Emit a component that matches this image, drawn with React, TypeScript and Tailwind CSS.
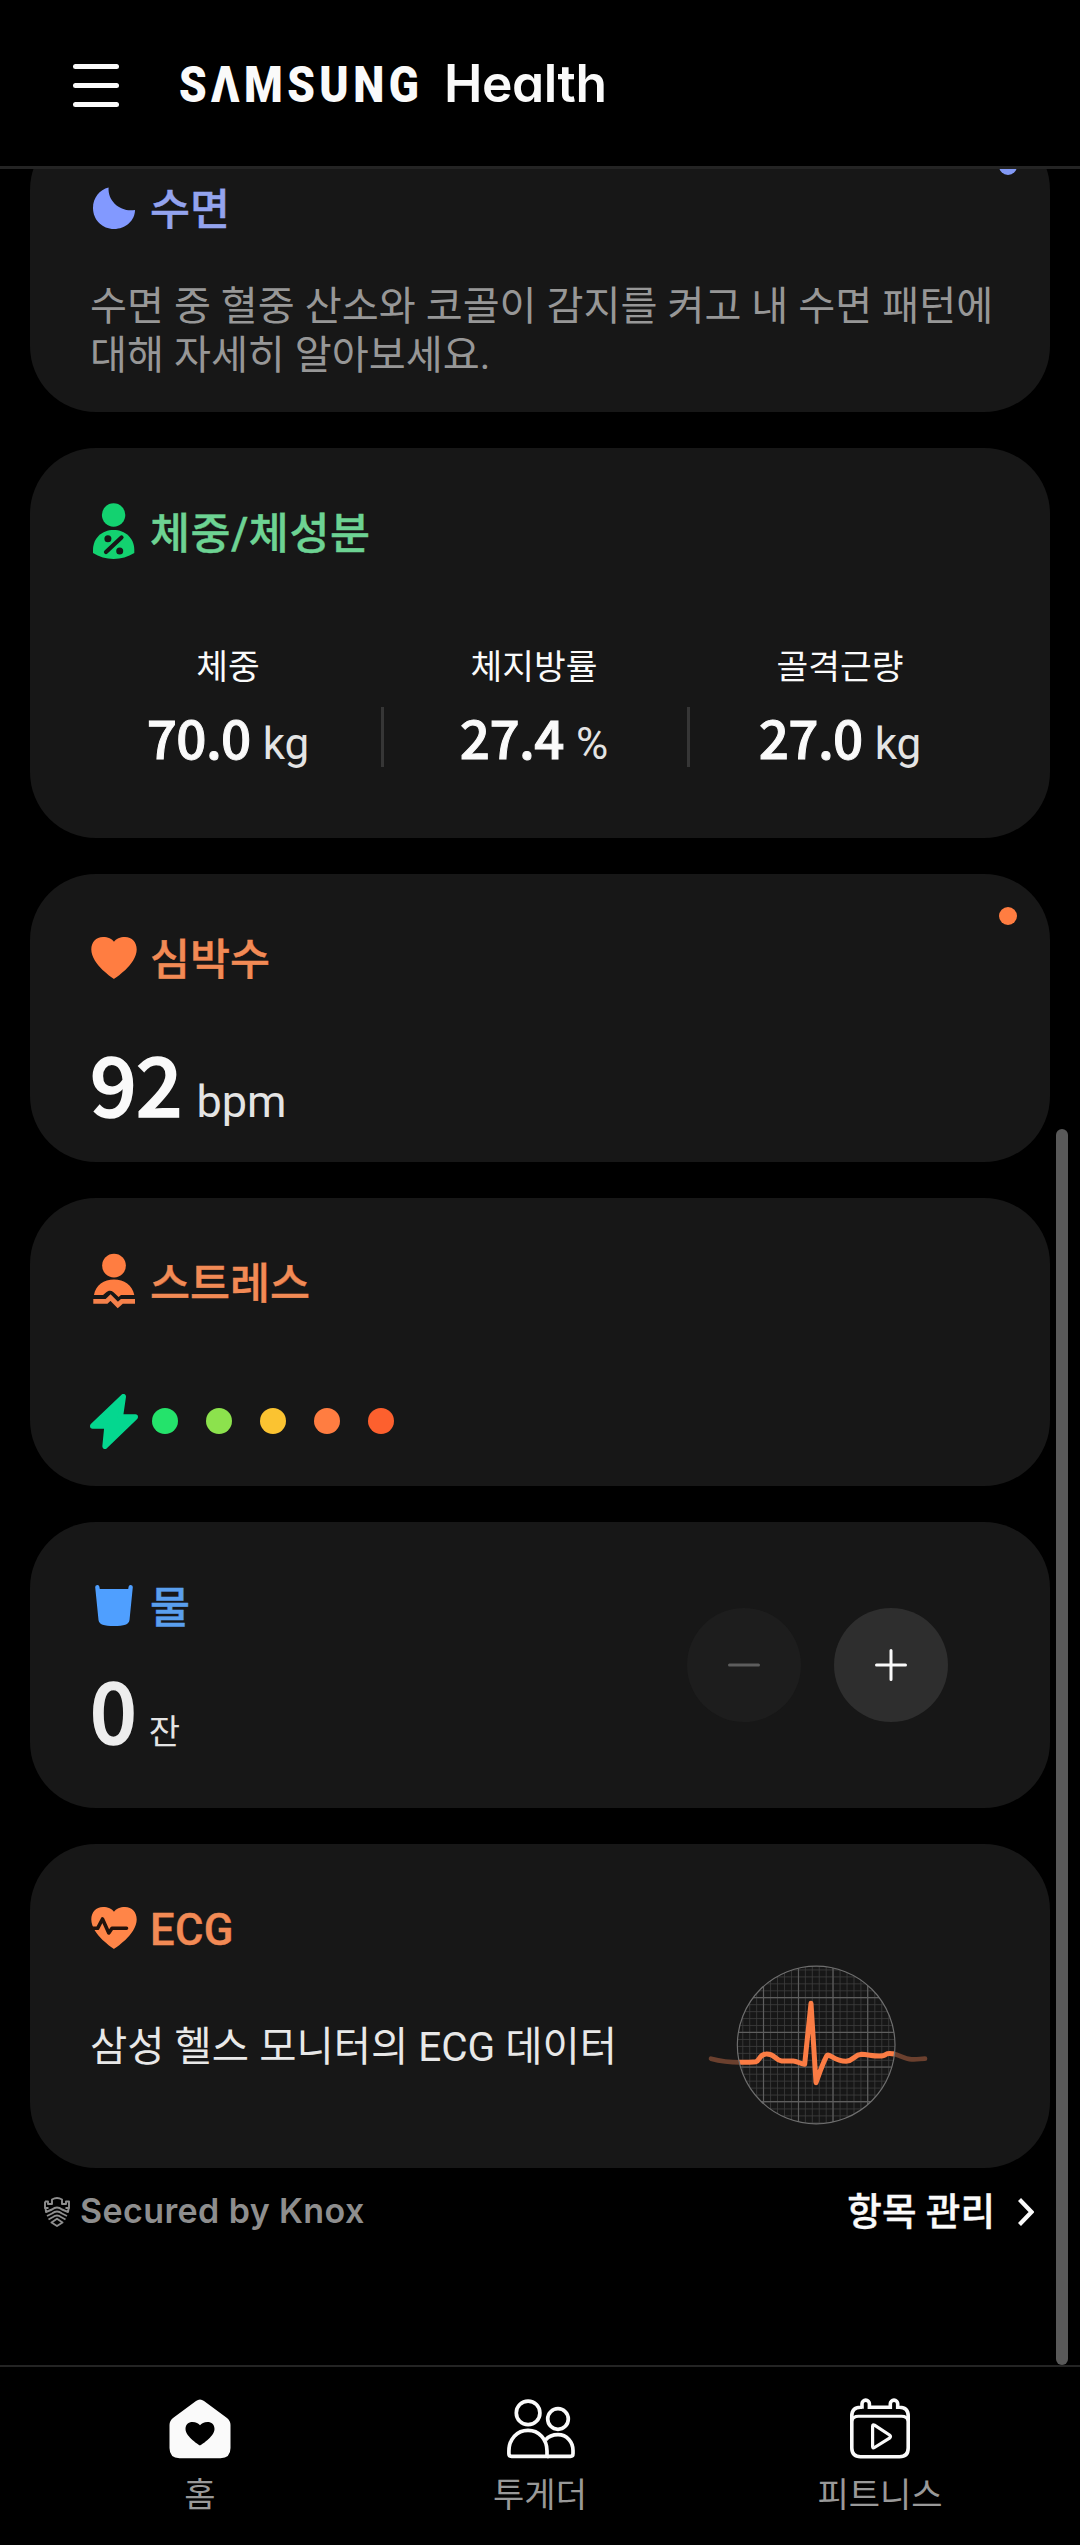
import type { ReactNode } from "react";

const HEART =
  "M24 52C24 52 1.3 37.5 1.3 22.5C1.3 15 6 10 13 10C18 10 22 12 24 14.7C26 12 30 10 35 10C42 10 46.7 15 46.7 22.5C46.7 37.5 24 52 24 52Z";

const MoonIcon = () => (
  <svg viewBox="0 0 48 64" className="h-16 w-12 fill-[#8299ff]">
    <path d="M18.6 10.5C9.5 12.5 3 21 3 31C3 43 12.5 52 24 52C35.5 52 45 43.5 45 33C31 35.5 17.5 24.5 18.6 10.5Z" />
  </svg>
);

const BodyIcon = () => (
  <svg viewBox="0 0 48 64" className="h-16 w-12 fill-[#13d270]">
    <circle cx="23.6" cy="14" r="11.7" />
    <path d="M3 49C3 37 12 29 23.6 29S44.3 37 44.3 49V52C38 56 31 57.9 23.6 57.9S9 56 3 52Z" />
    <path
      d="M16 51L31.5 36.5"
      strokeWidth="4.2"
      strokeLinecap="round"
      className="stroke-[#171717]"
    />
    <circle cx="17.9" cy="37.7" r="3.5" className="fill-[#171717]" />
    <circle cx="29.7" cy="50" r="3.5" className="fill-[#171717]" />
  </svg>
);

const HeartIcon = () => (
  <svg viewBox="0 0 48 64" className="h-16 w-12 fill-[#ff7d41]">
    <path d={HEART} />
  </svg>
);

const StressIcon = () => (
  <svg viewBox="0 0 48 64" className="h-16 w-12 fill-[#ff7d41]">
    <circle cx="24" cy="14.6" r="11.9" />
    <path d="M4 44C5.5 34 14 28.4 24 28.4S42.5 34 44.3 44H31L28.6 46L23.5 41.2C21 39.3 18.5 39.3 16 41.5L13 44Z" />
    <path
      d="M3.3 50.4H16.5L20.5 46.6L27.8 54L31.8 50.4H45"
      fill="none"
      strokeWidth="4.7"
      className="stroke-[#f5814b]"
    />
  </svg>
);

const CupIcon = () => (
  <svg viewBox="0 0 48 64" className="h-16 w-12 fill-[#4f9fff]">
    <path d="M5.2 12.2A2.1 2.1 0 0 1 9.4 11.8L9.8 14H38.2L38.6 11.8A2.1 2.1 0 0 1 42.8 12.2L39.5 45C39 49.5 34 51 24 51S9 49.5 8.5 45Z" />
  </svg>
);

const EcgIcon = () => (
  <svg viewBox="0 0 48 64" className="h-16 w-12 fill-[#ff8548]">
    <path d={HEART} />
    <path
      d="M0 31.3H7.6L12.5 22L18.8 36L22 31.3H36.5"
      fill="none"
      strokeWidth="3.6"
      strokeLinecap="round"
      strokeLinejoin="round"
      className="stroke-[#22130c]"
    />
  </svg>
);

const BoltIcon = () => (
  <svg viewBox="210 612 144 165" className="h-[55px] w-12">
    <path
      d="M310 620L301 681H346L255 769L261 708H218Z"
      strokeWidth="16"
      strokeLinejoin="round"
      className="fill-[#04d78f] stroke-[#04d78f]"
    />
  </svg>
);

const minorLines = Array.from({ length: 24 }, (_, i) => i);

const EcgGraph = () => (
  <svg viewBox="141 99 666 492" className="h-[164px] w-[222px]">
    <defs>
      <clipPath id="scope">
        <circle cx="468.5" cy="345" r="236" />
      </clipPath>
    </defs>
    <g clipPath="url(#scope)" fill="none">
      {minorLines.map((i) => (
        <path
          key={i}
          d={`M${227.5 + i * 20.85} 99V591M220 ${99 + i * 20.85}H720`}
          strokeWidth="2.5"
          className="stroke-[#3d3d3d]"
        />
      ))}
      <path
        d="M310.5 99V591M415.5 99V591M519 99V591M623 99V591M220 203H720M220 307H720M220 411H720M220 515H720"
        strokeWidth="3.5"
        className="stroke-[#5e5e5e]"
      />
    </g>
    <g fill="none" strokeWidth="14" strokeLinecap="round">
      <path d="M153 386Q195 397 240 397" className="stroke-[#6b402e]" />
      <path
        d="M700 371C722 376 732 388 755 388C775 389 780 386 795 386"
        className="stroke-[#6b402e]"
      />
    </g>
    <path
      clipPath="url(#scope)"
      d="M230 397C255 397 275 397 288 395C300 391 298 373 318 372C345 370 345 391 365 393H400C412 394 418 400 434 403L453 220L468 458C478 430 488 400 500 378C505 366 522 394 558 394C582 392 582 374 605 373C630 374 665 384 678 373C685 368 695 371 712 373"
      fill="none"
      strokeWidth="15"
      strokeLinecap="round"
      strokeLinejoin="round"
      className="stroke-[#fb7c44]"
    />
    <circle
      cx="468.5"
      cy="345"
      r="236.5"
      fill="none"
      strokeWidth="3.5"
      className="stroke-[#6f6f6f]"
    />
  </svg>
);

const KnoxIcon = () => (
  <svg
    viewBox="0 0 26 30"
    fill="none"
    strokeWidth="1.9"
    strokeLinejoin="round"
    className="h-[30px] w-[26px] stroke-[#8e8e8e]"
  >
    <path d="M1 4.5V11H4.5M1 4.5H4V7H8V2.5C11 .8 15 .8 18 2.5V7H22V4.5H25V11H21.5" />
    <path d="M1.5 11L2 15L8 12.5Q13 8.5 18 12.5L24 15L24.7 11" />
    <path d="M3 19L8 16.5Q13 12.5 18 16.5L23 19" />
    <path d="M4.5 22.5L9 20Q13 17 17 20L21.5 22.5" />
    <path d="M7.5 25.5L13 21.8L18.5 25.5L13 29Z" />
  </svg>
);

const HomeIcon = () => (
  <svg viewBox="0 0 62 60" className="h-[60px] w-[62px]">
    <path
      d="M27 2Q31-1 35 2L58 19Q61.5 21.8 61.5 26V49Q61.5 59.2 51.5 59.2H10.5Q.5 59.2 .5 49V26Q.5 21.8 4 19Z"
      fill="#fafafa"
    />
    <path d="M31 46.5C31 46.5 16.5 38 16.5 30C16.5 25.5 19.5 23 23.5 23C27 23 29.5 24.5 31 26.3C32.5 24.5 35 23 38.5 23C42.5 23 45.5 25.5 45.5 30C45.5 38 31 46.5 31 46.5Z" />
  </svg>
);

const TogetherIcon = () => (
  <svg
    viewBox="0 0 68 60"
    fill="none"
    strokeWidth="3.7"
    className="ml-[2px] h-[60px] w-[68px] stroke-[#fafafa]"
  >
    <circle cx="21.1" cy="13.9" r="11.8" />
    <circle cx="51" cy="20" r="10.3" />
    <path d="M1.9 52C1.9 40 10 31.3 21 31.3S40 40 40 52V57.3H4.5Q1.9 57.3 1.9 54.5Z" />
    <path d="M38.5 41C41.5 37.5 46 35.7 51 35.7C60 35.7 66 43 66 51.5V54.5Q66 57.3 63.5 57.3H40" />
  </svg>
);

const FitnessIcon = () => (
  <svg
    viewBox="0 0 62 62"
    fill="none"
    strokeWidth="3.6"
    className="h-[62px] w-[62px] stroke-[#fafafa]"
  >
    <path d="M13 10.7V5.8A3.7 3.7 0 0 1 20.4 5.8V9.2H41.3V5.8A3.7 3.7 0 0 1 48.7 5.8V9.2H50.5Q59.2 9.2 59.2 18V50Q59.2 58.7 50.5 58.7H11.5Q2.8 58.7 2.8 50V18Q2.8 9.2 11.5 9.2H13" />
    <path d="M2.8 23Q3.8 18.2 9.5 18.2H52.5Q58.2 18.2 59.2 23" strokeWidth="3" />
    <path
      d="M23.6 28.2Q23.6 26 25.5 27.2L40.5 37Q42.5 38.6 40.5 40.2L25.5 49.5Q23.6 50.8 23.6 48.5Z"
      strokeWidth="3.2"
    />
  </svg>
);

type CardProps = {
  icon: ReactNode;
  title: string;
  titleClass: string;
  className: string;
  children: ReactNode;
};

const Card = ({ icon, title, titleClass, className, children }: CardProps) => (
  <section
    className={`relative flex shrink-0 flex-col rounded-[66px] bg-[#171717] pt-[53px] pl-[60px] ${className}`}
  >
    <div className="flex h-16 gap-3">
      {icon}
      <h2
        className={`mt-1 text-[43.5px] leading-[60px] font-medium [-webkit-text-stroke:0.4px] ${titleClass}`}
      >
        {title}
      </h2>
    </div>
    {children}
  </section>
);

const measures = [
  { label: "체중", value: "70.0", unit: "kg" },
  { label: "체지방률", value: "27.4", unit: "%" },
  { label: "골격근량", value: "27.0", unit: "kg" },
];

const tabs = [
  { label: "홈", icon: <HomeIcon /> },
  { label: "투게더", icon: <TogetherIcon /> },
  { label: "피트니스", icon: <FitnessIcon /> },
];

const App = () => {
  return (
    <div className="relative flex h-[2545px] w-[1080px] flex-col overflow-hidden bg-black font-[Roboto,'Noto_Sans_CJK_KR',sans-serif] text-[#fafafa]">
      <header className="flex h-[169px] shrink-0 items-center border-b-[3px] border-[#242424] pt-1 pl-[73px]">
        <div className="flex w-[46px] flex-col gap-[14px]">
          <span className="h-[5px] rounded-full bg-[#fafafa]" />
          <span className="h-[5px] rounded-full bg-[#fafafa]" />
          <span className="h-[5px] rounded-full bg-[#fafafa]" />
        </div>
        <h1 className="-mt-[2px] ml-[60px] flex items-baseline leading-[60px]">
          <span
            aria-label="SAMSUNG"
            className="w-[265px] origin-left scale-x-[.885] text-[50px] font-black tracking-[5px] whitespace-nowrap"
          >
            SΛMSUNG
          </span>
          <span className="text-[51.5px] font-semibold tracking-[-0.4px] font-[Inter,sans-serif] [font-feature-settings:'cv11']">
            Health
          </span>
        </h1>
      </header>

      <main className="flex h-[2196px] shrink-0 flex-col overflow-hidden px-[30px]">
        <div className="-mt-[45px] flex flex-col gap-9">
          <Card
            icon={<MoonIcon />}
            title="수면"
            titleClass="text-[#93a3ee]"
            className="h-[288px]"
          >
            <span className="absolute top-[33px] right-[33px] size-[18px] rounded-full bg-[#8299f5]" />
            <p className="mt-[41px] text-[40.2px] leading-[49px] whitespace-nowrap text-[#979797]">
              수면 중 혈중 산소와 코골이 감지를 켜고 내 수면 패턴에
              <br />
              대해 자세히 알아보세요.
            </p>
          </Card>

          <Card
            icon={<BodyIcon />}
            title="체중/체성분"
            titleClass="text-[#6dd393] tracking-[0.6px]"
            className="h-[390px]"
          >
            <div className="mt-[77px] -ml-[15px] flex">
              {measures.map((m, i) => (
                <div key={m.label} className="relative w-[306px] text-center">
                  <div className="text-[34.5px] leading-[50px]">{m.label}</div>
                  <div className="mt-[14px] leading-[60px] whitespace-nowrap">
                    <span className="text-[53px] font-medium tracking-[-0.6px] font-['Noto_Sans_CJK_KR',sans-serif] [-webkit-text-stroke:1px]">
                      {m.value}
                    </span>
                    <span className="ml-3 text-[44px] text-[#e4e4e4]">{m.unit}</span>
                  </div>
                  {i > 0 && (
                    <span className="absolute top-[65px] left-0 h-[60px] w-[3px] bg-[#363636]" />
                  )}
                </div>
              ))}
            </div>
          </Card>

          <Card
            icon={<HeartIcon />}
            title="심박수"
            titleClass="text-[#f28a55]"
            className="h-[288px]"
          >
            <span className="absolute top-[33px] right-[33px] size-[18px] rounded-full bg-[#ff7d41]" />
            <div className="mt-[46px] leading-[90px]">
              <span className="text-[82px] font-medium tracking-[-1px] font-['Noto_Sans_CJK_KR',sans-serif] [-webkit-text-stroke:1.6px]">
                92
              </span>
              <span className="ml-[15px] text-[45px] text-[#e4e4e4]">bpm</span>
            </div>
          </Card>

          <Card
            icon={<StressIcon />}
            title="스트레스"
            titleClass="text-[#f28a55]"
            className="h-[288px]"
          >
            <div className="mt-[79px] flex items-center">
              <BoltIcon />
              <div className="-mt-[1px] ml-[14px] flex gap-7">
                <span className="size-[26px] rounded-full bg-[#24e36b]" />
                <span className="size-[26px] rounded-full bg-[#8ce24d]" />
                <span className="size-[26px] rounded-full bg-[#fbc331]" />
                <span className="size-[26px] rounded-full bg-[#ff7d41]" />
                <span className="size-[26px] rounded-full bg-[#fd602e]" />
              </div>
            </div>
          </Card>

          <Card
            icon={<CupIcon />}
            title="물"
            titleClass="text-[#5a9fee]"
            className="h-[286px]"
          >
            <div className="flex justify-between pr-[102px]">
              <div className="mt-[25px] leading-[90px] text-[#ededed]">
                <span className="text-[82px] font-medium font-['Noto_Sans_CJK_KR',sans-serif] [-webkit-text-stroke:1.6px]">
                  0
                </span>
                <span className="ml-3 text-[34px] text-[#e4e4e4]">잔</span>
              </div>
              <div className="-mt-[31px] flex gap-[33px]">
                <button className="flex size-[114px] items-center justify-center rounded-full bg-[#1d1d1d]">
                  <svg viewBox="0 0 32 32" className="size-8 stroke-[#5d5d5d]">
                    <path d="M1.5 16H30.5" strokeWidth="3" strokeLinecap="round" />
                  </svg>
                </button>
                <button className="flex size-[114px] items-center justify-center rounded-full bg-[#2e2e2e]">
                  <svg viewBox="0 0 32 32" className="size-8 stroke-[#fafafa]">
                    <path d="M1.5 16H30.5M16 1.5V30.5" strokeWidth="3" strokeLinecap="round" />
                  </svg>
                </button>
              </div>
            </div>
          </Card>

          <Card
            icon={<EcgIcon />}
            title="ECG"
            titleClass="text-[#f28a55] tracking-[0.4px]"
            className="h-[324px]"
          >
            <div className="flex justify-between pr-[121px]">
              <p className="mt-[56px] text-[40.5px] leading-[60px] text-[#e8e8e8]">
                삼성 헬스 모니터의 ECG 데이터
              </p>
              <div className="mt-[2px]">
                <EcgGraph />
              </div>
            </div>
          </Card>
        </div>

        <footer className="mt-[14px] flex h-[60px] items-center justify-between pr-4 pl-[14px]">
          <div className="flex items-center gap-[10px]">
            <KnoxIcon />
            <span className="-mt-[4px] text-[34px] font-semibold tracking-[0.4px] text-[#8e8e8e] font-[Inter,sans-serif]">
              Secured by Knox
            </span>
          </div>
          <div className="flex items-center gap-[23px]">
            <span className="mt-[1px] text-[37.6px] font-medium [-webkit-text-stroke:0.4px]">
              항목 관리
            </span>
            <svg viewBox="0 0 16 28" fill="none" className="h-7 w-4 stroke-[#fafafa]">
              <path d="M1.5 1.5L13.5 14L1.5 26.5" strokeWidth="4.2" />
            </svg>
          </div>
        </footer>
      </main>

      <nav className="grid h-[180px] shrink-0 grid-cols-3 border-t-2 border-[#242424] px-[30px] pt-[31px]">
        {tabs.map((tab) => (
          <div key={tab.label} className="flex flex-col items-center">
            <div className="flex h-[62px] items-center">{tab.icon}</div>
            <span className="mt-[10px] text-[34px] leading-[50px] text-[#999]">
              {tab.label}
            </span>
          </div>
        ))}
      </nav>

      <div className="absolute top-[1129px] right-3 h-[1236px] w-3 rounded-full bg-[#595959]" />
    </div>
  );
};

export default App;
